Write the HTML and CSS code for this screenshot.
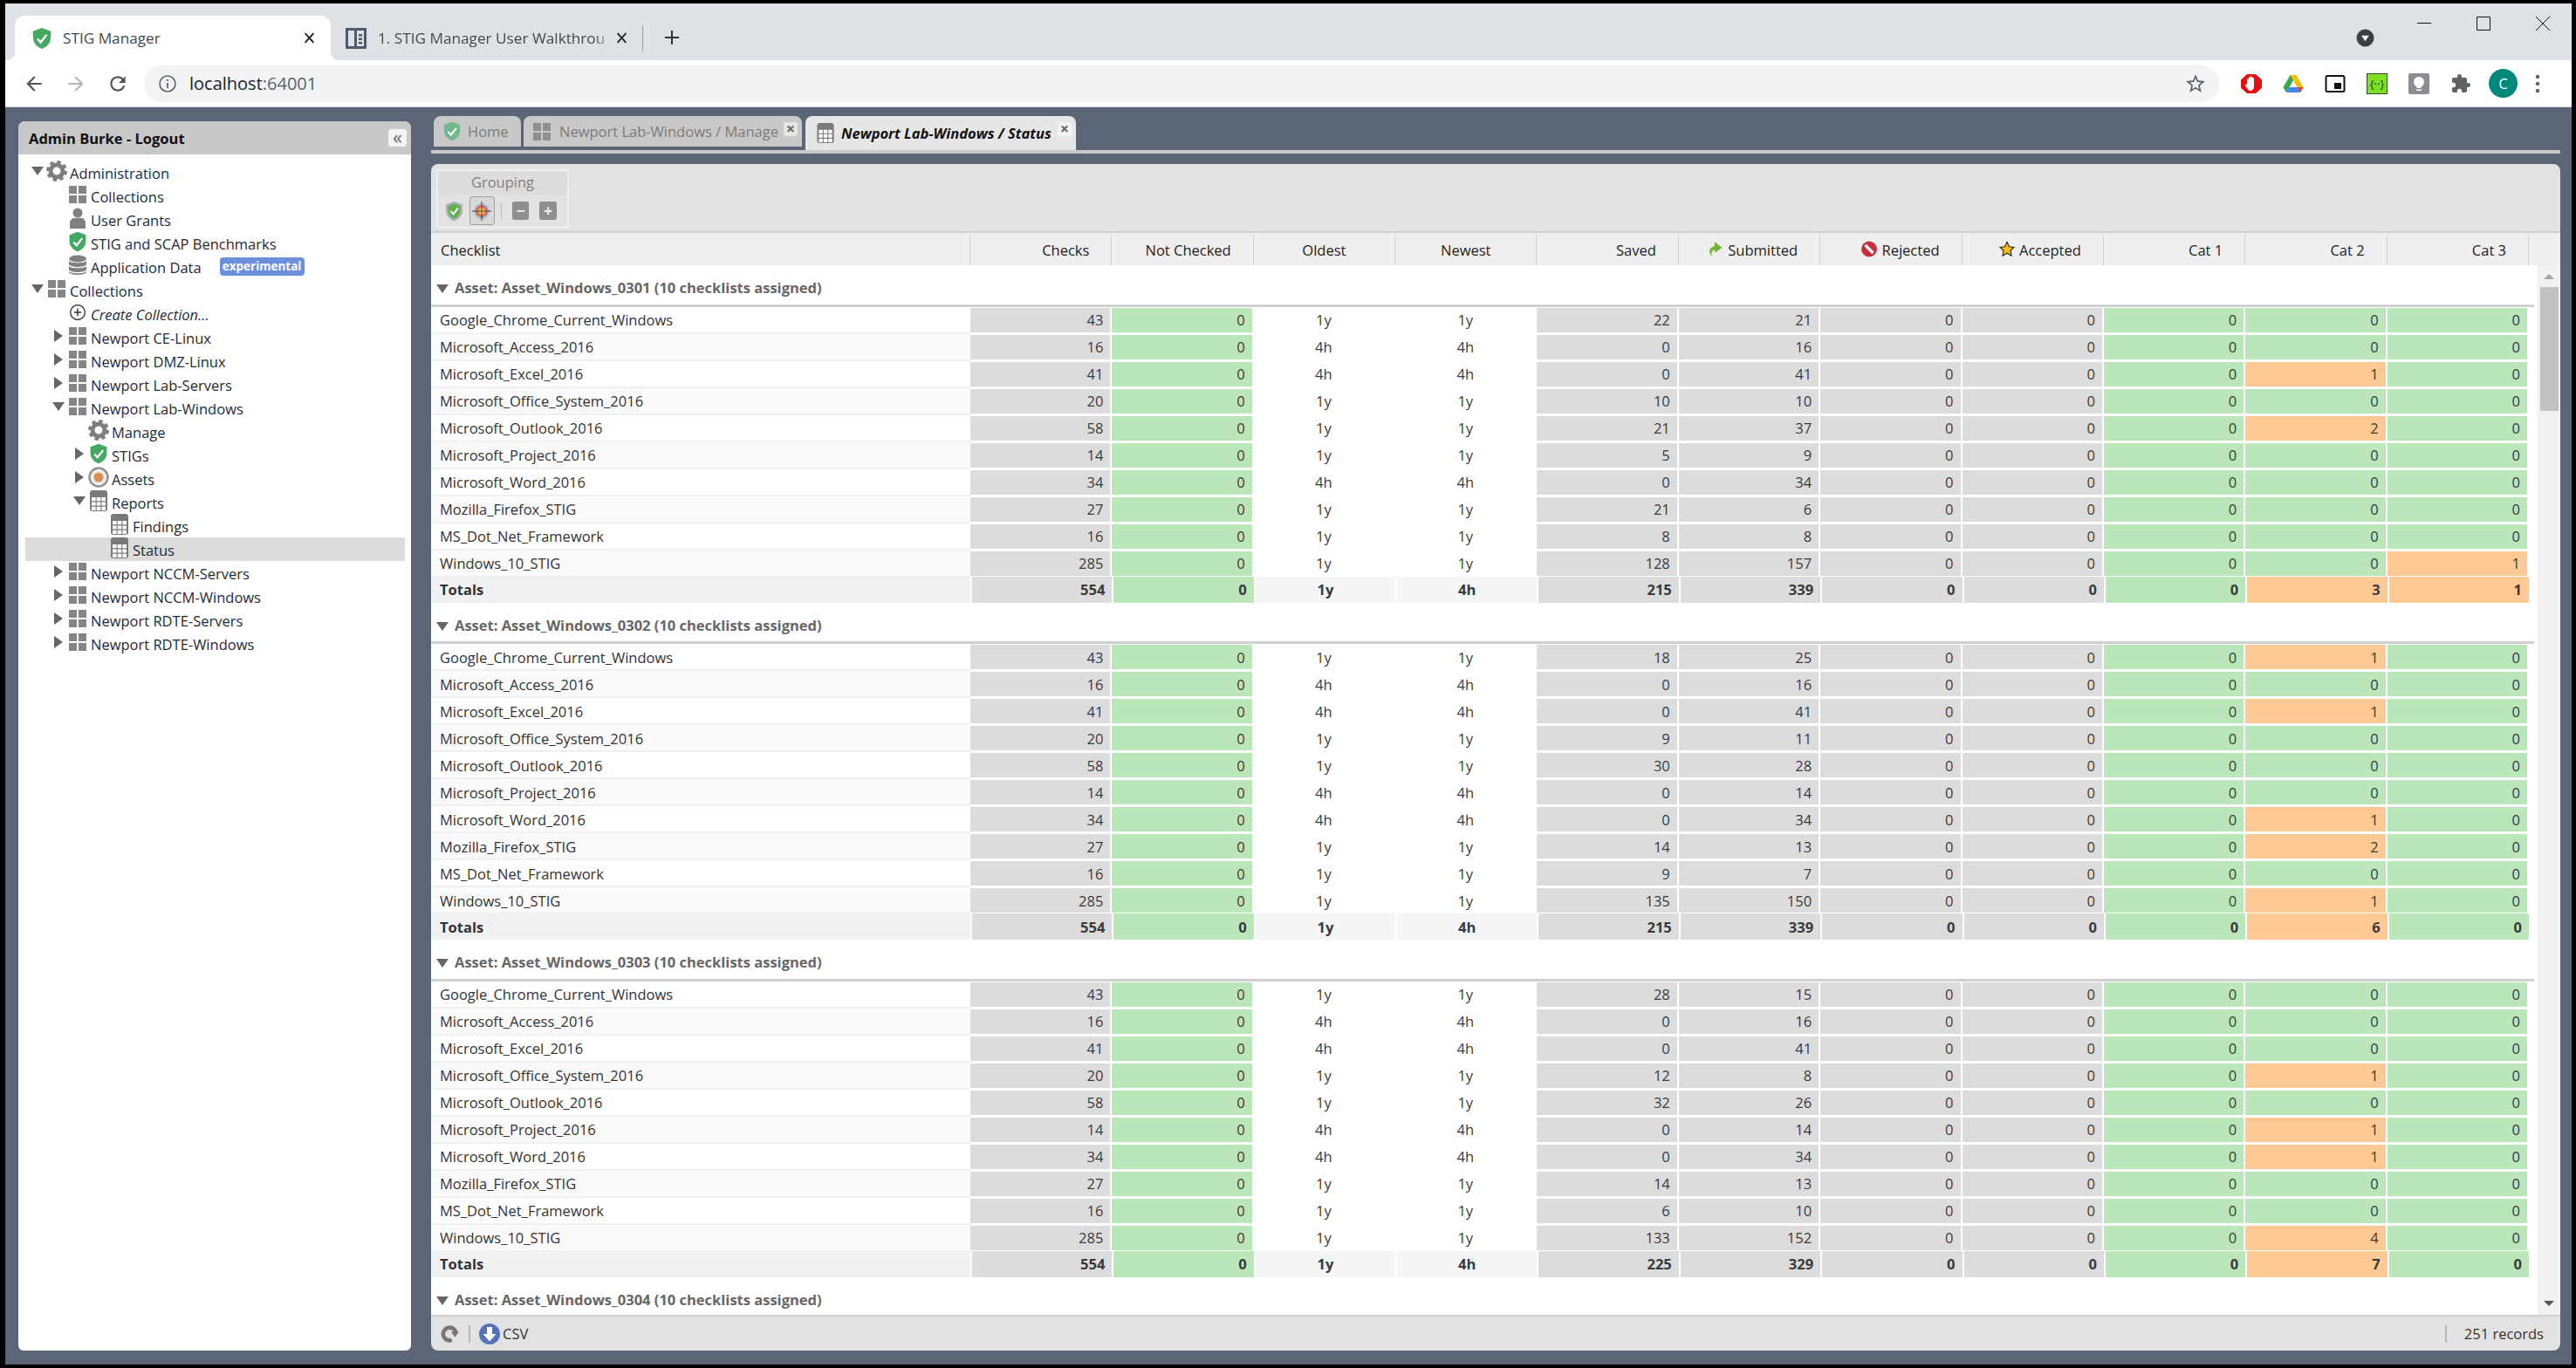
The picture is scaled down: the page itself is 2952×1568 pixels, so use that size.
FILE: index.html
```html
<!DOCTYPE html>
<html lang="en">
<head>
  <meta charset="UTF-8" />
  <title>STIG Manager</title>
  <link rel="stylesheet" href="styles.css">
</head>
<body>
  <svg class="sprite" xmlns="http://www.w3.org/2000/svg">
    <symbol id="shield" viewBox="0 0 24 28"><path d="M12 1l11 4v8c0 7-5 12-11 14C6 25 1 20 1 13V5z" fill="#45a862"/><path d="M6.500 14.500l4 4.500 7.500-9.500" fill="none" stroke="#fff" stroke-width="2.600"/></symbol>
    <symbol id="shield-fade" viewBox="0 0 24 28"><path d="M12 1l11 4v8c0 7-5 12-11 14C6 25 1 20 1 13V5z" fill="#6fb98a"/><path d="M6.500 14.500l4 4.500 7.500-9.500" fill="none" stroke="#fff" stroke-width="2.600"/></symbol>
    <symbol id="grid" viewBox="0 0 20 20"><path d="M0 0h9v9H0zM11 0h9v9h-9zM0 11h9v9H0zM11 11h9v9h-9z" fill="#858585"/></symbol>
    <symbol id="grid-fade" viewBox="0 0 20 20"><path d="M0 0h9v9H0zM11 0h9v9h-9zM0 11h9v9H0zM11 11h9v9h-9z" fill="#8f8f8f"/></symbol>
    <symbol id="gear" viewBox="0 0 24 24"><circle cx="12" cy="12" r="7" fill="none" stroke="#7d7d7d" stroke-width="5"/><circle cx="12" cy="12" r="10.300" fill="none" stroke="#7d7d7d" stroke-width="3.400" stroke-dasharray="4.300 3.790"/></symbol>
    <symbol id="user" viewBox="0 0 20 24"><circle cx="10" cy="6" r="5.500" fill="#808080"/><path d="M1 24v-7c0-3 3-5 5-5h8c2 0 5 2 5 5v7z" fill="#808080"/></symbol>
    <symbol id="db" viewBox="0 0 24 24"><g fill="#808080"><ellipse cx="12" cy="4.500" rx="10" ry="4"/><path d="M2 7c1 3 19 3 20 0v4c-1 4-19 4-20 0zM2 13c1 3 19 3 20 0v4c-1 4-19 4-20 0zM2 19c1 3 19 3 20 0v1c-1 4-19 4-20 0z"/></g></symbol>
    <symbol id="add" viewBox="0 0 24 24"><circle cx="12" cy="12" r="10" fill="#fff" stroke="#555" stroke-width="2"/><path d="M12 7v10M7 12h10" stroke="#333" stroke-width="1.800"/></symbol>
    <symbol id="asset" viewBox="0 0 24 24"><circle cx="12" cy="12" r="10.500" fill="#eee" stroke="#909090" stroke-width="2.400"/><circle cx="12" cy="12" r="5.500" fill="#d98f56"/></symbol>
    <symbol id="report" viewBox="0 0 20 24"><rect width="20" height="24" rx="3" fill="#7a7a7a"/><path d="M2 8h4.600v4.200H2zM7.700 8h4.600v4.200H7.700zM13.400 8H18v4.200h-4.600zM2 13.400h4.600v4.200H2zM7.700 13.400h4.600v4.200H7.700zM13.400 13.400H18v4.200h-4.600zM2 18.800h4.600V23H2zM7.700 18.800h4.600V23H7.700zM13.400 18.800H18V23h-4.600z" fill="#fff"/></symbol>
    <symbol id="tri-right" viewBox="0 0 14 14"><path d="M2 0l10 7-10 7z" fill="#666"/></symbol>
    <symbol id="tri-down" viewBox="0 0 14 14"><path d="M0 2h14L7 12z" fill="#666"/></symbol>
    <symbol id="target" viewBox="0 0 24 24"><circle cx="12" cy="12" r="10" fill="#a9bfd8"/><circle cx="12" cy="12" r="7.500" fill="#d9605a"/><circle cx="12" cy="12" r="5" fill="#f0a64b"/><circle cx="12" cy="12" r="2.500" fill="#f7e27a"/><path d="M12 0v24M0 12h24" stroke="#333" stroke-width="1"/></symbol>
    <symbol id="gshield" viewBox="0 0 24 28"><path d="M12 1l11 4v8c0 7-5 12-11 14C6 25 1 20 1 13V5z" fill="#aab0ba"/><path d="M12 4l8 3v6c0 6-4 9-8 11-4-2-8-5-8-11V7z" fill="#62b04e"/><path d="M7.500 14l3.500 4 6-8" fill="none" stroke="#fff" stroke-width="2.200"/></symbol>
    <symbol id="submit" viewBox="0 0 16 18"><path d="M4 18C0 12 1 7 7 6V1l8 6.500L7 13V9.500C4 10.500 3 13 4 18z" fill="#6cb52d"/></symbol>
    <symbol id="reject" viewBox="0 0 18 18"><circle cx="9" cy="9" r="9" fill="#c7303c"/><path d="M4.500 4.500l9 9" stroke="#fff" stroke-width="3.200"/></symbol>
    <symbol id="accept" viewBox="0 0 20 20"><path d="M10 1l2.800 6 6.200.700-4.600 4.300 1.300 6.500L10 15.200 4.300 18.500 5.600 12 1 7.700 7.200 7z" fill="#f8bd12" stroke="#222" stroke-width="1.200"/></symbol>
  </svg>

  <div class="browser">
    <div class="tabstrip">
      <div class="ctab ctab-active">
        <svg class="ctab-icon"><use href="#shield"/></svg>
        <span class="ctab-title">STIG Manager</span>
        <svg class="ctab-close" viewBox="0 0 12 12"><path d="M1.500 1l9 10M10.500 1l-9 10" stroke="#222" stroke-width="1.700"/></svg>
      </div>
      <div class="ctab ctab-other">
        <svg class="ctab-icon" viewBox="0 0 24 24"><path d="M0 0h24v24H0z" fill="#4d5a68"/><path d="M3 3h7v18H3zM13 3h8v18h-8z" fill="#dee1e6"/><path d="M15 7h4v2.500h-4zM15 11.500h4V14h-4zM15 16h4v2.500h-4z" fill="#4d5a68"/></svg>
        <span class="ctab-title ctab-fade">1. STIG Manager User Walkthrou</span>
        <svg class="ctab-close" viewBox="0 0 12 12"><path d="M1.500 1l9 10M10.500 1l-9 10" stroke="#222" stroke-width="1.700"/></svg>
      </div>
      <div class="ctab-sep"></div>
      <svg class="new-tab" viewBox="0 0 20 20"><path d="M10 1v18M1 10h18" stroke="#333" stroke-width="2.200"/></svg>
      <svg class="tab-search" viewBox="0 0 22 22"><circle cx="11" cy="11" r="10.500" fill="#3c4043"/><path d="M6.500 8h9L11 15z" fill="#fff"/></svg>
      <div class="win-ctrls">
        <svg class="win-btn" viewBox="0 0 16 16"><path d="M0 7.500h16" stroke="#111" stroke-width="1"/></svg>
        <svg class="win-btn" viewBox="0 0 16 16"><path d="M.5 .5h15v15H.5z" fill="none" stroke="#111" stroke-width="1"/></svg>
        <svg class="win-btn" viewBox="0 0 16 16"><path d="M0 0l16 16M16 0L0 16" stroke="#111" stroke-width="1"/></svg>
      </div>
    </div>

    <div class="navbar">
      <svg class="nav-btn" viewBox="0 0 24 24"><path d="M20 11H7.830l5.590-5.590L12 4l-8 8 8 8 1.410-1.410L7.830 13H20v-2z" fill="#555"/></svg>
      <svg class="nav-btn" viewBox="0 0 24 24"><path d="M4 11h12.170l-5.590-5.590L12 4l8 8-8 8-1.410-1.410L16.170 13H4v-2z" fill="#b4b7bb"/></svg>
      <svg class="nav-btn" viewBox="0 0 24 24"><path d="M17.650 6.350C16.200 4.900 14.210 4 12 4c-4.420 0-7.990 3.580-7.990 8s3.570 8 7.990 8c3.730 0 6.840-2.550 7.730-6h-2.080c-.82 2.330-3.040 4-5.650 4-3.310 0-6-2.690-6-6s2.690-6 6-6c1.660 0 3.140.69 4.220 1.780L13 11h7V4l-2.350 2.350z" fill="#555"/></svg>
      <div class="omnibox">
        <svg class="omni-info" viewBox="0 0 20 20"><circle cx="10" cy="10" r="9" fill="none" stroke="#5f6368" stroke-width="1.600"/><path d="M10 9v6M10 5v2" stroke="#5f6368" stroke-width="1.800"/></svg>
        <span class="omni-host">localhost</span><span class="omni-port">:64001</span>
        <svg class="omni-star" viewBox="0 0 24 24"><path d="M22 9.240l-7.190-.62L12 2 9.190 8.630 2 9.240l5.460 4.730L5.820 21 12 17.270 18.180 21l-1.630-7.030L22 9.240zM12 15.400l-3.760 2.270 1-4.280-3.320-2.880 4.380-.38L12 6.100l1.710 4.040 4.380.38-3.320 2.880 1 4.280L12 15.400z" fill="#5f6368"/></svg>
      </div>
      <div class="ext-icons">
        <svg class="ext" viewBox="0 0 24 24"><path d="M7 0h10l7 7v10l-7 7H7l-7-7V7z" transform="translate(0 1) scale(1 .92)" fill="#e3100f"/><path d="M7 11V7a1 1 0 012 0V5a1 1 0 012 0v-.500a1 1 0 012 0V6a1 1 0 012 0v9c0 3-2 5-4 5s-3-1-4-3l-2-3c-.5-1 1-2 2-1z" fill="#fff"/></svg>
        <svg class="ext" viewBox="0 0 24 24"><path d="M8.500 2h7l8 14h-7z" fill="#fbbc04"/><path d="M8.500 2L.500 16l3.500 6 8-14z" fill="#34a853"/><path d="M4 22h16l3.500-6H7.500z" fill="#4285f4"/><path d="M23.500 16h-7l3.500 6z" fill="#ea4335"/></svg>
        <svg class="ext" viewBox="0 0 24 24"><rect x="1.500" y="3" width="21" height="18" rx="1.500" fill="#fff" stroke="#111" stroke-width="2"/><path d="M11 11h8v7h-8z" fill="#111"/></svg>
        <div class="ext ext-json">{··}</div>
        <svg class="ext" viewBox="0 0 24 24"><rect width="24" height="24" rx="2" fill="#8a8d91"/><circle cx="12" cy="10" r="6" fill="#fff"/><path d="M9.500 14h5v3h-5zM9 18.500h6v1.500H9z" fill="#fff"/></svg>
        <svg class="ext" viewBox="0 0 24 24"><path d="M20.500 11H19V7c0-1.100-.9-2-2-2h-4V3.500C13 2.120 11.880 1 10.500 1S8 2.120 8 3.500V5H4c-1.100 0-1.990.9-1.990 2v3.800H3.500c1.490 0 2.700 1.210 2.700 2.700s-1.210 2.700-2.700 2.700H2V20c0 1.100.9 2 2 2h3.800v-1.500c0-1.490 1.210-2.700 2.700-2.700 1.490 0 2.700 1.210 2.700 2.700V22H17c1.100 0 2-.9 2-2v-4h1.500c1.380 0 2.500-1.120 2.500-2.500S21.880 11 20.500 11z" fill="#5f6368"/></svg>
        <div class="avatar">C</div>
        <svg class="dots" viewBox="0 0 6 22"><circle cx="3" cy="3" r="2.200" fill="#5f6368"/><circle cx="3" cy="11" r="2.200" fill="#5f6368"/><circle cx="3" cy="19" r="2.200" fill="#5f6368"/></svg>
      </div>
    </div>

    <div class="app">
      <aside class="sidebar">
        <div class="side-head">
          <span>Admin Burke - Logout</span>
          <div class="collapse-btn">«</div>
        </div>
        <div class="tree">
          <div class="row l0"><svg class="arrow"><use href="#tri-down"/></svg><svg class="ico"><use href="#gear"/></svg><span class="label">Administration</span></div>
          <div class="row l1"><span class="arrow"></span><svg class="ico ico-s"><use href="#grid"/></svg><span class="label">Collections</span></div>
          <div class="row l1"><span class="arrow"></span><svg class="ico"><use href="#user"/></svg><span class="label">User Grants</span></div>
          <div class="row l1"><span class="arrow"></span><svg class="ico"><use href="#shield"/></svg><span class="label">STIG and SCAP Benchmarks</span></div>
          <div class="row l1"><span class="arrow"></span><svg class="ico"><use href="#db"/></svg><span class="label">Application Data</span><span class="badge">experimental</span></div>
          <div class="row l0"><svg class="arrow"><use href="#tri-down"/></svg><svg class="ico ico-s"><use href="#grid"/></svg><span class="label">Collections</span></div>
          <div class="row l1"><span class="arrow"></span><svg class="ico ico-s"><use href="#add"/></svg><span class="label label-em">Create Collection...</span></div>
          <div class="row l1"><svg class="arrow"><use href="#tri-right"/></svg><svg class="ico ico-s"><use href="#grid"/></svg><span class="label">Newport CE-Linux</span></div>
          <div class="row l1"><svg class="arrow"><use href="#tri-right"/></svg><svg class="ico ico-s"><use href="#grid"/></svg><span class="label">Newport DMZ-Linux</span></div>
          <div class="row l1"><svg class="arrow"><use href="#tri-right"/></svg><svg class="ico ico-s"><use href="#grid"/></svg><span class="label">Newport Lab-Servers</span></div>
          <div class="row l1"><svg class="arrow"><use href="#tri-down"/></svg><svg class="ico ico-s"><use href="#grid"/></svg><span class="label">Newport Lab-Windows</span></div>
          <div class="row l2"><span class="arrow"></span><svg class="ico"><use href="#gear"/></svg><span class="label">Manage</span></div>
          <div class="row l2"><svg class="arrow"><use href="#tri-right"/></svg><svg class="ico"><use href="#shield"/></svg><span class="label">STIGs</span></div>
          <div class="row l2"><svg class="arrow"><use href="#tri-right"/></svg><svg class="ico"><use href="#asset"/></svg><span class="label">Assets</span></div>
          <div class="row l2"><svg class="arrow"><use href="#tri-down"/></svg><svg class="ico"><use href="#report"/></svg><span class="label">Reports</span></div>
          <div class="row l3"><span class="arrow"></span><svg class="ico"><use href="#report"/></svg><span class="label">Findings</span></div>
          <div class="row l3 row-selected"><span class="arrow"></span><svg class="ico"><use href="#report"/></svg><span class="label">Status</span></div>
          <div class="row l1"><svg class="arrow"><use href="#tri-right"/></svg><svg class="ico ico-s"><use href="#grid"/></svg><span class="label">Newport NCCM-Servers</span></div>
          <div class="row l1"><svg class="arrow"><use href="#tri-right"/></svg><svg class="ico ico-s"><use href="#grid"/></svg><span class="label">Newport NCCM-Windows</span></div>
          <div class="row l1"><svg class="arrow"><use href="#tri-right"/></svg><svg class="ico ico-s"><use href="#grid"/></svg><span class="label">Newport RDTE-Servers</span></div>
          <div class="row l1"><svg class="arrow"><use href="#tri-right"/></svg><svg class="ico ico-s"><use href="#grid"/></svg><span class="label">Newport RDTE-Windows</span></div>
        </div>
      </aside>

      <main class="content">
        <div class="apptabs">
          <div class="apptab apptab-home"><svg class="apptab-icon"><use href="#shield-fade"/></svg><span>Home</span></div>
          <div class="apptab apptab-manage"><svg class="apptab-icon"><use href="#grid-fade"/></svg><span>Newport Lab-Windows / Manage</span><span class="tab-x">×</span></div>
          <div class="apptab apptab-active"><svg class="apptab-icon"><use href="#report"/></svg><span>Newport Lab-Windows / Status</span><span class="tab-x">×</span></div>
        </div>
        <div class="apptabs-line"></div>

        <section class="panel">
          <div class="toolbar">
            <div class="btn-group">
              <div class="btn-group-title">Grouping</div>
              <div class="btn-group-body">
                <svg class="tool-shield"><use href="#gshield"/></svg>
                <div class="tool-pressed"><svg class="tool-target"><use href="#target"/></svg></div>
                <div class="tool-sep"></div>
                <div class="tool-square">−</div>
                <div class="tool-square">+</div>
              </div>
            </div>
          </div>

          <div class="grid-head">
            <table class="grid-table">
              <colgroup><col class="col-name"><col class="col-n" span="11"></colgroup>
              <tr>
                <th class="left">Checklist</th>
                <th>Checks</th>
                <th>Not Checked</th>
                <th class="mid">Oldest</th>
                <th class="mid">Newest</th>
                <th>Saved</th>
                <th><svg class="head-icon"><use href="#submit"/></svg> Submitted</th>
                <th><svg class="head-icon"><use href="#reject"/></svg> Rejected</th>
                <th><svg class="head-icon"><use href="#accept"/></svg> Accepted</th>
                <th>Cat 1</th>
                <th>Cat 2</th>
                <th>Cat 3</th>
              </tr>
            </table>
          </div>

          <div class="grid-body">
            <div class="grid-scroll">
              <table class="grid-table data">
                <colgroup><col class="col-name"><col class="col-n" span="11"><col class="col-pad"></colgroup>
                <tbody>
                  <tr class="group"><th colspan="13"><svg class="group-tri"><use href="#tri-down"/></svg>Asset: Asset_Windows_0301 (10 checklists assigned)</th></tr>
                  <tr><td>Google_Chrome_Current_Windows</td><td>43</td><td>0</td><td>1y</td><td>1y</td><td>22</td><td>21</td><td>0</td><td>0</td><td>0</td><td>0</td><td>0</td></tr>
                  <tr><td>Microsoft_Access_2016</td><td>16</td><td>0</td><td>4h</td><td>4h</td><td>0</td><td>16</td><td>0</td><td>0</td><td>0</td><td>0</td><td>0</td></tr>
                  <tr><td>Microsoft_Excel_2016</td><td>41</td><td>0</td><td>4h</td><td>4h</td><td>0</td><td>41</td><td>0</td><td>0</td><td>0</td><td class="warn">1</td><td>0</td></tr>
                  <tr><td>Microsoft_Office_System_2016</td><td>20</td><td>0</td><td>1y</td><td>1y</td><td>10</td><td>10</td><td>0</td><td>0</td><td>0</td><td>0</td><td>0</td></tr>
                  <tr><td>Microsoft_Outlook_2016</td><td>58</td><td>0</td><td>1y</td><td>1y</td><td>21</td><td>37</td><td>0</td><td>0</td><td>0</td><td class="warn">2</td><td>0</td></tr>
                  <tr><td>Microsoft_Project_2016</td><td>14</td><td>0</td><td>1y</td><td>1y</td><td>5</td><td>9</td><td>0</td><td>0</td><td>0</td><td>0</td><td>0</td></tr>
                  <tr><td>Microsoft_Word_2016</td><td>34</td><td>0</td><td>4h</td><td>4h</td><td>0</td><td>34</td><td>0</td><td>0</td><td>0</td><td>0</td><td>0</td></tr>
                  <tr><td>Mozilla_Firefox_STIG</td><td>27</td><td>0</td><td>1y</td><td>1y</td><td>21</td><td>6</td><td>0</td><td>0</td><td>0</td><td>0</td><td>0</td></tr>
                  <tr><td>MS_Dot_Net_Framework</td><td>16</td><td>0</td><td>1y</td><td>1y</td><td>8</td><td>8</td><td>0</td><td>0</td><td>0</td><td>0</td><td>0</td></tr>
                  <tr class="last"><td>Windows_10_STIG</td><td>285</td><td>0</td><td>1y</td><td>1y</td><td>128</td><td>157</td><td>0</td><td>0</td><td>0</td><td>0</td><td class="warn">1</td></tr>
                  <tr class="totals"><td>Totals</td><td>554</td><td>0</td><td>1y</td><td>4h</td><td>215</td><td>339</td><td>0</td><td>0</td><td>0</td><td class="warn">3</td><td class="warn">1</td></tr>

                  <tr class="group"><th colspan="13"><svg class="group-tri"><use href="#tri-down"/></svg>Asset: Asset_Windows_0302 (10 checklists assigned)</th></tr>
                  <tr><td>Google_Chrome_Current_Windows</td><td>43</td><td>0</td><td>1y</td><td>1y</td><td>18</td><td>25</td><td>0</td><td>0</td><td>0</td><td class="warn">1</td><td>0</td></tr>
                  <tr><td>Microsoft_Access_2016</td><td>16</td><td>0</td><td>4h</td><td>4h</td><td>0</td><td>16</td><td>0</td><td>0</td><td>0</td><td>0</td><td>0</td></tr>
                  <tr><td>Microsoft_Excel_2016</td><td>41</td><td>0</td><td>4h</td><td>4h</td><td>0</td><td>41</td><td>0</td><td>0</td><td>0</td><td class="warn">1</td><td>0</td></tr>
                  <tr><td>Microsoft_Office_System_2016</td><td>20</td><td>0</td><td>1y</td><td>1y</td><td>9</td><td>11</td><td>0</td><td>0</td><td>0</td><td>0</td><td>0</td></tr>
                  <tr><td>Microsoft_Outlook_2016</td><td>58</td><td>0</td><td>1y</td><td>1y</td><td>30</td><td>28</td><td>0</td><td>0</td><td>0</td><td>0</td><td>0</td></tr>
                  <tr><td>Microsoft_Project_2016</td><td>14</td><td>0</td><td>4h</td><td>4h</td><td>0</td><td>14</td><td>0</td><td>0</td><td>0</td><td>0</td><td>0</td></tr>
                  <tr><td>Microsoft_Word_2016</td><td>34</td><td>0</td><td>4h</td><td>4h</td><td>0</td><td>34</td><td>0</td><td>0</td><td>0</td><td class="warn">1</td><td>0</td></tr>
                  <tr><td>Mozilla_Firefox_STIG</td><td>27</td><td>0</td><td>1y</td><td>1y</td><td>14</td><td>13</td><td>0</td><td>0</td><td>0</td><td class="warn">2</td><td>0</td></tr>
                  <tr><td>MS_Dot_Net_Framework</td><td>16</td><td>0</td><td>1y</td><td>1y</td><td>9</td><td>7</td><td>0</td><td>0</td><td>0</td><td>0</td><td>0</td></tr>
                  <tr class="last"><td>Windows_10_STIG</td><td>285</td><td>0</td><td>1y</td><td>1y</td><td>135</td><td>150</td><td>0</td><td>0</td><td>0</td><td class="warn">1</td><td>0</td></tr>
                  <tr class="totals"><td>Totals</td><td>554</td><td>0</td><td>1y</td><td>4h</td><td>215</td><td>339</td><td>0</td><td>0</td><td>0</td><td class="warn">6</td><td>0</td></tr>

                  <tr class="group"><th colspan="13"><svg class="group-tri"><use href="#tri-down"/></svg>Asset: Asset_Windows_0303 (10 checklists assigned)</th></tr>
                  <tr><td>Google_Chrome_Current_Windows</td><td>43</td><td>0</td><td>1y</td><td>1y</td><td>28</td><td>15</td><td>0</td><td>0</td><td>0</td><td>0</td><td>0</td></tr>
                  <tr><td>Microsoft_Access_2016</td><td>16</td><td>0</td><td>4h</td><td>4h</td><td>0</td><td>16</td><td>0</td><td>0</td><td>0</td><td>0</td><td>0</td></tr>
                  <tr><td>Microsoft_Excel_2016</td><td>41</td><td>0</td><td>4h</td><td>4h</td><td>0</td><td>41</td><td>0</td><td>0</td><td>0</td><td>0</td><td>0</td></tr>
                  <tr><td>Microsoft_Office_System_2016</td><td>20</td><td>0</td><td>1y</td><td>1y</td><td>12</td><td>8</td><td>0</td><td>0</td><td>0</td><td class="warn">1</td><td>0</td></tr>
                  <tr><td>Microsoft_Outlook_2016</td><td>58</td><td>0</td><td>1y</td><td>1y</td><td>32</td><td>26</td><td>0</td><td>0</td><td>0</td><td>0</td><td>0</td></tr>
                  <tr><td>Microsoft_Project_2016</td><td>14</td><td>0</td><td>4h</td><td>4h</td><td>0</td><td>14</td><td>0</td><td>0</td><td>0</td><td class="warn">1</td><td>0</td></tr>
                  <tr><td>Microsoft_Word_2016</td><td>34</td><td>0</td><td>4h</td><td>4h</td><td>0</td><td>34</td><td>0</td><td>0</td><td>0</td><td class="warn">1</td><td>0</td></tr>
                  <tr><td>Mozilla_Firefox_STIG</td><td>27</td><td>0</td><td>1y</td><td>1y</td><td>14</td><td>13</td><td>0</td><td>0</td><td>0</td><td>0</td><td>0</td></tr>
                  <tr><td>MS_Dot_Net_Framework</td><td>16</td><td>0</td><td>1y</td><td>1y</td><td>6</td><td>10</td><td>0</td><td>0</td><td>0</td><td>0</td><td>0</td></tr>
                  <tr class="last"><td>Windows_10_STIG</td><td>285</td><td>0</td><td>1y</td><td>1y</td><td>133</td><td>152</td><td>0</td><td>0</td><td>0</td><td class="warn">4</td><td>0</td></tr>
                  <tr class="totals"><td>Totals</td><td>554</td><td>0</td><td>1y</td><td>4h</td><td>225</td><td>329</td><td>0</td><td>0</td><td>0</td><td class="warn">7</td><td>0</td></tr>

                  <tr class="group"><th colspan="13"><svg class="group-tri"><use href="#tri-down"/></svg>Asset: Asset_Windows_0304 (10 checklists assigned)</th></tr>
                </tbody>
              </table>
            </div>
            <div class="scrollbar">
              <div class="scroll-up"></div>
              <div class="scroll-thumb"></div>
              <div class="scroll-down"></div>
            </div>
          </div>

          <div class="footer">
            <svg class="foot-refresh" viewBox="0 0 24 24"><path d="M15 19.500A8 8 0 1120 10" fill="none" stroke="#7a7472" stroke-width="5"/><path d="M14 9h10l-5 7z" fill="#7a7472"/></svg>
            <div class="foot-sep"></div>
            <svg class="foot-csv" viewBox="0 0 24 24"><circle cx="12" cy="12" r="12" fill="#5571b8"/><path d="M9 4h6v8h4.500L12 20.500 4.500 12H9z" fill="#fff"/></svg>
            <span>CSV</span>
            <div class="foot-sep foot-sep-right"></div>
            <span class="foot-count">251 records</span>
          </div>
        </section>
      </main>
    </div>
  </div>
</body>
</html>
```

FILE: styles.css
```css
* {
  box-sizing: border-box;
}
html, body {
  margin: 0;
  height: 100%;
}
body {
  background-color: #000;
  padding: 4px 5px 4px 6px;
  font-family: "Open Sans", "Noto Sans", sans-serif;
  overflow: hidden;
  color: #222;
}
.sprite {
  display: none;
}
.browser {
  height: 100%;
  display: flex;
  flex-direction: column;
}

/* chrome tabs */
.tabstrip {
  height: 65px;
  flex: none;
  background-color: #dee1e6;
  display: flex;
  align-items: flex-end;
  padding-left: 11px;
}
.ctab {
  height: 51px;
  display: flex;
  align-items: center;
  font-size: 17.2px;
  color: #45484d;
  border-radius: 12px 12px 0 0;
}
.ctab-other {
  width: 349px;
  padding: 0 9px 0 17px;
}
.ctab-active {
  position: relative;
  background-color: #fff;
  width: 362px;
  padding: 0 18px 0 20px;
}
.ctab-active::before,
.ctab-active::after {
  content: "";
  position: absolute;
  bottom: 0;
  width: 10px;
  height: 10px;
}
.ctab-active::before {
  left: -10px;
  background: radial-gradient(circle at 0 0, transparent 10px, #fff 10.5px);
}
.ctab-active::after {
  right: -10px;
  background: radial-gradient(circle at 100% 0, transparent 10px, #fff 10.5px);
}
.ctab-icon {
  width: 24px;
  height: 24px;
  margin-right: 13px;
  flex: none;
}
.ctab-active .ctab-icon {
  width: 22px;
  height: 26px;
  margin-right: 13px;
}
.ctab-title {
  flex: 1;
  white-space: nowrap;
  overflow: hidden;
}
.ctab-fade {
  -webkit-mask-image: linear-gradient(to right, #000 92%, transparent);
  mask-image: linear-gradient(to right, #000 92%, transparent);
}
.ctab-close {
  width: 13px;
  height: 13px;
  flex: none;
  margin-left: 4px;
}
.ctab-active .ctab-close {
  margin-left: 12px;
}
.ctab-sep {
  width: 1px;
  height: 30px;
  background-color: #9aa0a6;
  margin: 0 0 10px 8px;
}
.new-tab {
  width: 18px;
  height: 18px;
  margin: 0 0 17px 24px;
}
.tab-search {
  width: 21px;
  height: 21px;
  margin: 0 0 15px auto;
}
.win-ctrls {
  align-self: flex-start;
  display: flex;
  gap: 52px;
  margin: 15px 25px 0 49px;
}
.win-btn {
  width: 16px;
  height: 16px;
}

/* toolbar */
.navbar {
  height: 54px;
  flex: none;
  background-color: #fff;
  border-bottom: 1px solid #d5d7da;
  display: flex;
  align-items: center;
  padding-left: 20px;
}
.nav-btn {
  width: 26px;
  height: 26px;
  margin-right: 22px;
  flex: none;
}
.omnibox {
  width: 2378px;
  height: 42px;
  margin-left: -5px;
  background-color: #f1f3f4;
  border-radius: 21px;
  display: flex;
  align-items: center;
  padding: 0 14px 0 17px;
  font-size: 20px;
  flex: none;
}
.omni-info {
  width: 20px;
  height: 20px;
  margin-right: 15px;
}
.omni-host {
  color: #202124;
}
.omni-port {
  color: #5f6368;
}
.omni-star {
  width: 26px;
  height: 26px;
  margin-left: auto;
}
.ext-icons {
  display: flex;
  align-items: center;
  gap: 24px;
  margin-left: 25px;
}
.ext {
  width: 24px;
  height: 24px;
  flex: none;
}
.ext-json {
  background-color: #7fe01f;
  border: 1px solid #2f4a3a;
  font-size: 13px;
  line-height: 22px;
  text-align: center;
  color: #1d3a2a;
  white-space: nowrap;
  overflow: hidden;
}
.avatar {
  width: 33px;
  height: 33px;
  margin-left: -4px;
  border-radius: 50%;
  background-color: #00897b;
  color: #fff;
  text-align: center;
  line-height: 33px;
  font-size: 17px;
}
.dots {
  width: 6px;
  height: 22px;
  margin-left: -4px;
}

/* app shell */
.app {
  flex: 1;
  min-height: 0;
  background-color: #5a6675;
  display: flex;
  gap: 23px;
  padding: 10px 13px 16px 15px;
}
.sidebar {
  width: 450px;
  flex: none;
  margin-top: 6px;
  background-color: #fff;
  border-radius: 8px 8px 6px 6px;
  overflow: hidden;
}
.side-head {
  height: 38px;
  background-color: #c8c8c8;
  display: flex;
  align-items: center;
  justify-content: space-between;
  padding: 0 5px 0 12px;
  font-size: 16.500px;
  font-weight: 700;
  color: #111;
}
.collapse-btn {
  width: 21px;
  height: 20px;
  background-color: #f3f3f3;
  border-radius: 3px;
  text-align: center;
  line-height: 16px;
  font-size: 22px;
  font-weight: 400;
  color: #666;
}
.tree {
  padding: 7px 7px 0 8px;
  font-size: 16.500px;
}
.row {
  height: 27px;
  display: flex;
  align-items: center;
  white-space: nowrap;
}
.l0 { padding-left: 4px; }
.l1 { padding-left: 28px; }
.l2 { padding-left: 52px; }
.l3 { padding-left: 76px; }
.row-selected {
  background-color: #dcdcdc;
}
.arrow {
  width: 20px;
  height: 14px;
  flex: none;
  margin-top: -3px;
}
.ico {
  width: 24px;
  height: 24px;
  flex: none;
  margin-right: 3px;
  margin-top: -3px;
}
.ico-s {
  height: 20px;
}
.label {
  margin-top: 2px;
  color: #1f2a33;
}
.label-em {
  font-style: italic;
}
.badge {
  margin: 0 0 0 21px;
  width: 97px;
  height: 21px;
  line-height: 21px;
  text-align: center;
  background-color: #6b8fdc;
  color: #fff;
  font-size: 13.5px;
  font-weight: 700;
  border-radius: 4px;
}

/* app tabs */
.content {
  flex: 1;
  min-width: 0;
  display: flex;
  flex-direction: column;
}
.apptabs {
  height: 39px;
  flex: none;
  display: flex;
  gap: 3px;
  padding-left: 3px;
}
.apptab {
  height: 35px;
  display: flex;
  align-items: center;
  position: relative;
  background-color: #c8c8c8;
  color: #7b7b7b;
  font-size: 16.500px;
  border-radius: 8px 8px 0 0;
  white-space: nowrap;
}
.apptab-home {
  width: 100px;
  padding-left: 11px;
}
.apptab-manage {
  width: 319px;
  padding-left: 11px;
}
.apptab-active {
  width: 310px;
  height: 39px;
  margin-left: 1px;
  padding-left: 13px;
  background-color: #e6e6e6;
  color: #111;
  font-weight: 700;
  font-style: italic;
}
.apptab-icon {
  width: 20px;
  height: 23px;
  margin-right: 8px;
  flex: none;
}
.apptab-manage .apptab-icon {
  height: 20px;
  margin-right: 10px;
}
.apptab-active .apptab-icon {
  margin-right: 8px;
}
.tab-x {
  position: absolute;
  top: 7px;
  right: 5px;
  width: 16px;
  height: 16px;
  border-radius: 3px;
  background-color: #e6e6e6;
  color: #666;
  font-size: 18px;
  font-style: normal;
  font-weight: 700;
  line-height: 14px;
  text-align: center;
}
.apptab-active .tab-x {
  background-color: #f2f2f2;
}
.apptabs-line {
  height: 4px;
  flex: none;
  background-color: #c8c8c8;
}

/* grid panel */
.panel {
  flex: 1;
  min-height: 0;
  margin-top: 12px;
  background-color: #e2e2e2;
  border-radius: 8px;
  overflow: hidden;
  display: flex;
  flex-direction: column;
}
.toolbar {
  height: 79px;
  flex: none;
  padding: 6px;
  border-bottom: 2px solid #d0d0d0;
}
.btn-group {
  width: 152px;
  height: 68px;
  border: 2px solid #efefef;
  border-radius: 3px;
}
.btn-group-title {
  height: 27px;
  background-color: #dcdcdc;
  text-align: center;
  font-size: 16.500px;
  line-height: 26px;
  color: #808080;
}
.btn-group-body {
  display: flex;
  align-items: center;
  height: 37px;
  padding-left: 8px;
}
.tool-shield {
  width: 21px;
  height: 24px;
  flex: none;
}
.tool-pressed {
  width: 31px;
  height: 33px;
  margin-left: 7px;
  border: 1px solid #a0a0a0;
  border-radius: 3px;
  background-color: #d8d8d8;
  display: flex;
  align-items: center;
  justify-content: center;
}
.tool-target {
  width: 22px;
  height: 24px;
}
.tool-sep {
  width: 1px;
  height: 20px;
  margin: 0 12px 0 7px;
  background-color: #bbb;
}
.tool-square {
  width: 21px;
  height: 21px;
  margin-right: 12px;
  border-radius: 3px;
  background-color: #8e8e8e;
  color: #eee;
  font-size: 18px;
  font-weight: 700;
  line-height: 20px;
  text-align: center;
}
.grid-head {
  height: 37px;
  flex: none;
  padding-top: 2px;
  background-color: #efefef;
}
.grid-table {
  border-collapse: separate;
  border-spacing: 0;
  table-layout: fixed;
  width: 2404px;
  font-size: 16.500px;
}
.grid-table.data {
  width: 2410px;
}
.col-name { width: 618px; }
.col-n { width: 162.36px; }
.col-pad { width: 6px; }
.grid-head th {
  height: 35px;
  padding: 0 25px 0 10px;
  font-weight: 400;
  text-align: right;
  color: #222;
  border-right: 1px solid #cfcfcf;
  white-space: nowrap;
}
.grid-head th.left {
  text-align: left;
  padding-left: 11px;
}
.grid-head th.mid {
  text-align: center;
  padding: 0;
}
.head-icon {
  width: 18px;
  height: 19px;
  vertical-align: -2px;
  margin-right: 1px;
}
.grid-body {
  flex: 1;
  min-height: 0;
  display: flex;
  background-color: #fff;
}
.grid-scroll {
  flex: 1;
  min-width: 0;
  overflow: hidden;
}
.scrollbar {
  width: 26px;
  flex: none;
  background-color: #f1f1f1;
  display: flex;
  flex-direction: column;
  align-items: center;
  padding-top: 10px;
}
.scroll-up {
  width: 0;
  height: 0;
  border-left: 6px solid transparent;
  border-right: 6px solid transparent;
  border-bottom: 6px solid #a3a3a3;
}
.scroll-thumb {
  width: 21px;
  height: 142px;
  margin-top: 9px;
  background-color: #c1c1c1;
}
.scroll-down {
  width: 0;
  height: 0;
  margin-top: auto;
  margin-bottom: 10px;
  border-left: 6px solid transparent;
  border-right: 6px solid transparent;
  border-top: 6px solid #555;
}

/* data rows */
.data td {
  height: 31px;
  padding: 0 8px 0 0;
  border-top: 1px solid #fff;
  border-right: 2px solid #fff;
  border-bottom: 2px solid #fff;
  text-align: right;
  color: #3a3a3a;
  background-color: #dcdcdc;
  white-space: nowrap;
}
.data td:first-child {
  padding-left: 10px;
  text-align: left;
  background-color: #fff;
  border-right: 0;
  border-top-color: #fff;
  border-bottom-color: #f0f0f0;
  color: #333;
}
.data tr:nth-child(odd) td:first-child {
  background-color: #fafafa;
  border-top-color: #fafafa;
}
.data td:nth-child(3),
.data td:nth-child(n+10) {
  background-color: #bae6b9;
}
.data td:nth-child(4),
.data td:nth-child(5) {
  text-align: center;
  padding-right: 0;
  background-color: #fff;
}
.data td.warn {
  background-color: #fec995;
}
.data tr.last td {
  height: 30px;
  border-bottom-width: 1px;
}
.data tr.totals td {
  height: 30px;
  border-top: 0;
  border-bottom: 0;
  border-right: 0;
  border-left: 2px solid #fff;
  font-weight: 700;
}
.data tr.totals td:first-child {
  background-color: #f0f1f3;
  border-left: 0;
  color: #333;
}
.data tr.totals td:nth-child(4),
.data tr.totals td:nth-child(5) {
  background-color: #f5f5f5;
}
.data tr.group th {
  height: 47.5px;
  padding: 7px 0 0 6px;
  text-align: left;
  font-weight: 700;
  color: #666;
  border-bottom: 3px solid #cfcfcf;
  background-color: #fff;
  white-space: nowrap;
}
.group-tri {
  width: 14px;
  height: 14px;
  margin-right: 7px;
  vertical-align: -2px;
}

/* footer */
.footer {
  height: 41px;
  flex: none;
  border-top: 2px solid #d0d0d0;
  display: flex;
  align-items: center;
  padding-left: 9px;
  font-size: 16.500px;
  color: #333;
}
.foot-refresh {
  width: 24px;
  height: 22px;
}
.foot-sep {
  width: 2px;
  height: 20px;
  margin: 0 10px;
  background-color: #bdbab5;
}
.foot-csv {
  width: 24px;
  height: 24px;
  margin-right: 3px;
}
.foot-sep-right {
  margin: 0 20px 0 auto;
}
.foot-count {
  margin-right: 19px;
}
```
